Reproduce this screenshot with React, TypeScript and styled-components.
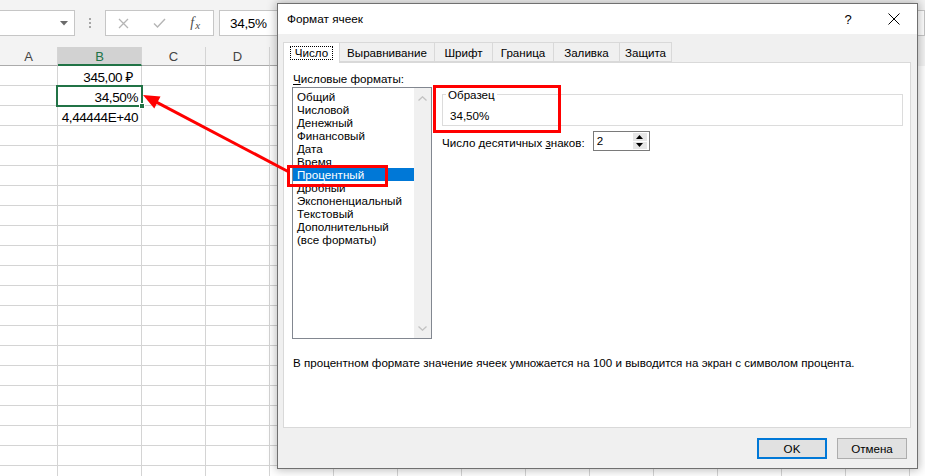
import React from "react";
import styled, { createGlobalStyle } from "styled-components";

const GlobalStyle = createGlobalStyle`
  html, body { margin: 0; padding: 0; background: #fff; }
  body { width: 925px; height: 476px; overflow: hidden; font-family: "Liberation Sans", "Noto Sans", sans-serif; }
  *, *::before, *::after { box-sizing: border-box; }
`;

const Page = styled.div`
  position: relative;
  width: 925px;
  height: 476px;
  overflow: hidden;
  background: #fff;
`;

/* ---------- spreadsheet ---------- */
const Sheet = styled.div`
  display: flex;
  flex-direction: column;
  width: 100%;
  height: 100%;
  font-family: "Liberation Sans", "Noto Sans", sans-serif;
`;

const FormulaBar = styled.div`
  height: 47px;
  flex-shrink: 0;
  background: #f3f3f3;
  display: flex;
  align-items: flex-start;
  padding-top: 10px;
`;

const NameBox = styled.div`
  width: 76px;
  height: 26px;
  margin-left: -1px;
  background: #fff;
  border: 1px solid #c6c6c6;
  display: flex;
  align-items: center;
  justify-content: flex-end;
  padding-right: 6px;
`;

const Grip = styled.div`
  width: 30px;
  height: 26px;
  display: flex;
  flex-direction: column;
  align-items: center;
  justify-content: center;
  gap: 2px;
`;

const GripDot = styled.span`
  width: 2px;
  height: 2px;
  background: #a6a6a6;
`;

const FxBox = styled.div`
  width: 109px;
  height: 26px;
  background: #fff;
  border: 1px solid #c6c6c6;
  display: flex;
  align-items: center;
`;

const FxSlot = styled.div`
  width: 36px;
  height: 24px;
  display: flex;
  align-items: center;
  justify-content: center;
  color: #4d4d4d;
  font-family: "Liberation Serif", serif;
  font-style: italic;
  font-size: 14px;
`;

const FxSub = styled.span`
  font-size: 11px;
  margin-left: 1px;
  position: relative;
  top: 2px;
`;

const FormulaInput = styled.div`
  flex: 1;
  margin-left: 5px;
  height: 26px;
  background: #fff;
  border: 1px solid #c6c6c6;
  padding-left: 10px;
  font-size: 13.5px;
  letter-spacing: -0.3px;
  line-height: 26px;
  color: #000;
`;

const HeaderRow = styled.div`
  display: flex;
  height: 19px;
  flex-shrink: 0;
  background: #f3f3f3;
`;

const HeaderCell = styled.div<{ $w: number; $active?: boolean }>`
  width: ${(p) => p.$w}px;
  flex-shrink: 0;
  height: 19px;
  border-right: 1px solid #d4d4d4;
  border-bottom: ${(p) => (p.$active ? "2px solid #217346" : "1px solid #ababab")};
  background: ${(p) => (p.$active ? "#d2d2d2" : "#f3f3f3")};
  color: ${(p) => (p.$active ? "#217346" : "#444")};
  font-size: 13px;
  padding-top: 2px;
  line-height: 16px;
  text-align: center;
`;

const GridRow = styled.div`
  display: flex;
  height: 20px;
  flex-shrink: 0;
`;

const Cell = styled.div<{ $w: number; $selected?: boolean; $pad?: number }>`
  position: relative;
  width: ${(p) => p.$w}px;
  flex-shrink: 0;
  height: 20px;
  border-right: 1px solid #d4d4d4;
  border-bottom: 1px solid #d4d4d4;
  display: flex;
  align-items: flex-end;
  justify-content: flex-end;
  padding-right: ${(p) => p.$pad ?? 3}px;
  font-size: 13.5px;
  letter-spacing: -0.4px;
  line-height: 14px;
  color: #000;
  white-space: nowrap;
  ${(p) =>
    p.$selected
      ? `
    z-index: 2;
    &::after {
      content: "";
      position: absolute;
      top: -1px; left: -2px; right: -2px; bottom: -2px;
      border: 2px solid #217346;
    }
    &::before {
      content: "";
      position: absolute;
      right: -4px; bottom: -4px;
      width: 6px; height: 6px;
      background: #217346;
      border: 1px solid #fff;
      z-index: 3;
    }
  `
      : ""}
`;

/* ---------- dialog ---------- */
const Dialog = styled.div`
  position: absolute;
  left: 277px;
  top: 3px;
  width: 641px;
  height: 466px;
  border: 1px solid #707070;
  background: #f0f0f0;
  box-shadow: 0 0 9px 1px rgba(0, 0, 0, 0.28);
  display: flex;
  flex-direction: column;
  font-family: "Liberation Sans", "Noto Sans", sans-serif;
  font-size: 11.6px;
  color: #000;
  z-index: 5;
`;

const TitleBar = styled.div`
  height: 30px;
  flex-shrink: 0;
  background: #fff;
  display: flex;
  align-items: center;
`;

const Title = styled.div`
  flex: 1;
  padding-left: 9px;
  font-size: 11.8px;
`;

const TitleButton = styled.div`
  width: 46px;
  height: 30px;
  display: flex;
  align-items: center;
  justify-content: center;
  font-size: 13px;
  color: #000;
`;

const Body = styled.div`
  flex: 1;
  display: flex;
  flex-direction: column;
  padding: 8px 6px 9px 5px;
`;

const TabStrip = styled.div`
  display: flex;
  align-items: flex-end;
  height: 20px;
  position: relative;
  z-index: 1;
`;

const Tab = styled.div<{ $active?: boolean; $w: number }>`
  width: ${(p) => p.$w}px;
  flex-shrink: 0;
  height: ${(p) => (p.$active ? 21 : 20)}px;
  margin-bottom: ${(p) => (p.$active ? -1 : 0)}px;
  padding-bottom: ${(p) => (p.$active ? 1 : 0)}px;
  border-top: 1px solid #d9d9d9;
  border-right: 1px solid #d9d9d9;
  border-bottom: ${(p) => (p.$active ? "none" : "1px solid #d9d9d9")};
  border-left: none;
  background: ${(p) => (p.$active ? "#fff" : "#f0f0f0")};
  display: flex;
  align-items: center;
  justify-content: center;
  white-space: nowrap;
  &:first-child {
    border-left: 1px solid #d9d9d9;
  }
`;

const FocusLabel = styled.span`
  border: 1px dotted #000;
  padding: 0 4px;
  line-height: 12px;
`;

const TabPanel = styled.div`
  height: 366px;
  flex-shrink: 0;
  border: 1px solid #d9d9d9;
  background: #fff;
  padding: 8px 7px 0 9px;
  display: flex;
  flex-direction: column;
`;

const PanelTop = styled.div`
  display: flex;
`;

const LeftCol = styled.div`
  width: 139px;
  flex-shrink: 0;
  display: flex;
  flex-direction: column;
`;

const FieldLabel = styled.div`
  height: 15px;
  line-height: 15px;
  white-space: nowrap;
`;

const ListBox = styled.div`
  margin-top: 1px;
  margin-left: -1px;
  width: 140px;
  height: 252px;
  border: 1px solid #828790;
  display: flex;
`;

const ListItems = styled.div`
  flex: 1;
  padding-top: 2px;
`;

const ListItem = styled.div<{ $selected?: boolean }>`
  height: 13px;
  line-height: 13px;
  padding-left: 4px;
  white-space: nowrap;
  background: ${(p) => (p.$selected ? "#0078d7" : "transparent")};
  color: ${(p) => (p.$selected ? "#fff" : "#000")};
`;

const ScrollTrack = styled.div`
  width: 17px;
  flex-shrink: 0;
  background: #f0f0f0;
  display: flex;
  flex-direction: column;
  justify-content: space-between;
  align-items: center;
  padding: 8px 0 7px;
`;

const RightCol = styled.div`
  flex: 1;
  margin-left: 10px;
  display: flex;
  flex-direction: column;
`;

const GroupBox = styled.fieldset`
  margin: 16px 0 0;
  padding: 6px 8px 0 7px;
  border: 1px solid #dcdcdc;
  height: 39px;
  min-width: 0;
`;

const GroupLegend = styled.legend`
  padding: 0 2px;
  margin-left: -4px;
  line-height: 15px;
`;

const SampleValue = styled.div`
  line-height: 15px;
  height: 15px;
`;

const DecimalsRow = styled.div`
  margin-top: 5px;
  display: flex;
  align-items: center;
  height: 20px;
`;

const DecimalsLabel = styled.div`
  white-space: nowrap;
  line-height: 15px;
  padding-top: 3px;
`;

const Spinner = styled.div`
  margin-left: 8px;
  width: 57px;
  height: 20px;
  border: 1px solid #7a7a7a;
  display: flex;
  background: #fff;
`;

const SpinValue = styled.div`
  flex: 1;
  padding-left: 3px;
  line-height: 18px;
`;

const SpinButtons = styled.div`
  width: 14px;
  margin: 1px 2px 1px 0;
  display: flex;
  flex-direction: column;
  gap: 1px;
`;

const SpinButton = styled.div`
  flex: 1;
  background: #e6e6e6;
  display: flex;
  align-items: center;
  justify-content: center;
`;

const Description = styled.div`
  margin-top: 16px;
  line-height: 15px;
  white-space: nowrap;
`;

const ButtonRow = styled.div`
  margin-top: 10px;
  display: flex;
  justify-content: flex-end;
  gap: 10px;
  padding-right: 4px;
`;

const DialogButton = styled.div<{ $primary?: boolean }>`
  width: 70px;
  height: 21px;
  background: #e1e1e1;
  border: ${(p) => (p.$primary ? "2px solid #0078d7" : "1px solid #adadad")};
  display: flex;
  align-items: center;
  justify-content: center;
`;

/* ---------- annotations ---------- */
const Annotations = styled.svg`
  position: absolute;
  left: 0;
  top: 0;
  width: 925px;
  height: 476px;
  pointer-events: none;
  z-index: 10;
`;

/* Only the columns left of the dialog are labelled; the rest lie under it. */
const COLS = ["A", "B", "C", "D", "", "", "", "", "", "", "", "", "", ""];
const colWidth = (i: number) => (i === 0 ? 58 : i === 1 ? 84 : 64);
const cellData: Record<number, { text: string; pad?: number }> = {
  0: { text: "345,00 ₽", pad: 8 },
  1: { text: "34,50%" },
  2: { text: "4,44444E+40" },
};

const formats = [
  "Общий",
  "Числовой",
  "Денежный",
  "Финансовый",
  "Дата",
  "Время",
  "Процентный",
  "Дробный",
  "Экспоненциальный",
  "Текстовый",
  "Дополнительный",
  "(все форматы)",
];

const tabs: { label: string; w: number }[] = [
  { label: "Число", w: 57 },
  { label: "Выравнивание", w: 95 },
  { label: "Шрифт", w: 58 },
  { label: "Граница", w: 61 },
  { label: "Заливка", w: 66 },
  { label: "Защита", w: 52 },
];

export default function App() {
  return (
    <Page>
      <GlobalStyle />
      <Sheet>
        <FormulaBar>
          <NameBox>
            <svg width="8" height="5" viewBox="0 0 8 5">
              <path d="M0 0 L8 0 L4 4.5 Z" fill="#6b6b6b" />
            </svg>
          </NameBox>
          <Grip>
            <GripDot />
            <GripDot />
            <GripDot />
          </Grip>
          <FxBox>
            <FxSlot>
              <svg width="11" height="11" viewBox="0 0 11 11">
                <path d="M1 1 L10 10 M10 1 L1 10" stroke="#b5b5b5" strokeWidth="1.3" fill="none" />
              </svg>
            </FxSlot>
            <FxSlot>
              <svg width="13" height="10" viewBox="0 0 13 10">
                <path d="M1 5.5 L4.5 9 L12 1" stroke="#b5b5b5" strokeWidth="1.4" fill="none" />
              </svg>
            </FxSlot>
            <FxSlot>
              f<FxSub>x</FxSub>
            </FxSlot>
          </FxBox>
          <FormulaInput>34,5%</FormulaInput>
        </FormulaBar>
        <HeaderRow>
          {COLS.map((c, i) => (
            <HeaderCell key={i} $w={colWidth(i)} $active={i === 1}>
              {c}
            </HeaderCell>
          ))}
        </HeaderRow>
        {Array.from({ length: 21 }).map((_, r) => (
          <GridRow key={r}>
            {COLS.map((_c, i) => {
              const d = i === 1 ? cellData[r] : undefined;
              return (
                <Cell key={i} $w={colWidth(i)} $selected={i === 1 && r === 1} $pad={d?.pad}>
                  {d?.text}
                </Cell>
              );
            })}
          </GridRow>
        ))}
      </Sheet>

      <Dialog>
        <TitleBar>
          <Title>Формат ячеек</Title>
          <TitleButton>?</TitleButton>
          <TitleButton>
            <svg width="12" height="12" viewBox="0 0 12 12">
              <path d="M0.5 0.5 L11.5 11.5 M11.5 0.5 L0.5 11.5" stroke="#000" strokeWidth="1" fill="none" />
            </svg>
          </TitleButton>
        </TitleBar>
        <Body>
          <TabStrip>
            {tabs.map((t, i) =>
              i === 0 ? (
                <Tab key={t.label} $w={t.w} $active>
                  <FocusLabel>{t.label}</FocusLabel>
                </Tab>
              ) : (
                <Tab key={t.label} $w={t.w}>
                  {t.label}
                </Tab>
              )
            )}
          </TabStrip>
          <TabPanel>
            <PanelTop>
              <LeftCol>
                <FieldLabel>
                  <u>Ч</u>исловые форматы:
                </FieldLabel>
                <ListBox>
                  <ListItems>
                    {formats.map((f) => (
                      <ListItem key={f} $selected={f === "Процентный"}>
                        {f}
                      </ListItem>
                    ))}
                  </ListItems>
                  <ScrollTrack>
                    <svg width="9" height="5" viewBox="0 0 9 5">
                      <path d="M0.5 4.5 L4.5 0.8 L8.5 4.5" stroke="#c2c2c2" strokeWidth="1.3" fill="none" />
                    </svg>
                    <svg width="9" height="5" viewBox="0 0 9 5">
                      <path d="M0.5 0.5 L4.5 4.2 L8.5 0.5" stroke="#c2c2c2" strokeWidth="1.3" fill="none" />
                    </svg>
                  </ScrollTrack>
                </ListBox>
              </LeftCol>
              <RightCol>
                <GroupBox>
                  <GroupLegend>Образец</GroupLegend>
                  <SampleValue>34,50%</SampleValue>
                </GroupBox>
                <DecimalsRow>
                  <DecimalsLabel>
                    Число десятичных <u>з</u>наков:
                  </DecimalsLabel>
                  <Spinner>
                    <SpinValue>2</SpinValue>
                    <SpinButtons>
                      <SpinButton>
                        <svg width="7" height="4" viewBox="0 0 7 4">
                          <path d="M0 4 L3.5 0 L7 4 Z" fill="#000" />
                        </svg>
                      </SpinButton>
                      <SpinButton>
                        <svg width="7" height="4" viewBox="0 0 7 4">
                          <path d="M0 0 L7 0 L3.5 4 Z" fill="#000" />
                        </svg>
                      </SpinButton>
                    </SpinButtons>
                  </Spinner>
                </DecimalsRow>
              </RightCol>
            </PanelTop>
            <Description>
              В процентном формате значение ячеек умножается на 100 и выводится на экран с символом процента.
            </Description>
          </TabPanel>
          <ButtonRow>
            <DialogButton $primary>OK</DialogButton>
            <DialogButton>Отмена</DialogButton>
          </ButtonRow>
        </Body>
      </Dialog>

      <Annotations viewBox="0 0 925 476">
        <rect x="434.5" y="86.5" width="125" height="45" fill="none" stroke="#ff0000" strokeWidth="3" />
        <rect x="288.5" y="166.5" width="98" height="19" fill="none" stroke="#ff0000" strokeWidth="3" />
        <line x1="289" y1="172" x2="155" y2="101.3" stroke="#ff0000" strokeWidth="3" />
        <polygon points="143,95 160.5,96.6 154.3,108.4" fill="#ff0000" />
      </Annotations>
    </Page>
  );
}
